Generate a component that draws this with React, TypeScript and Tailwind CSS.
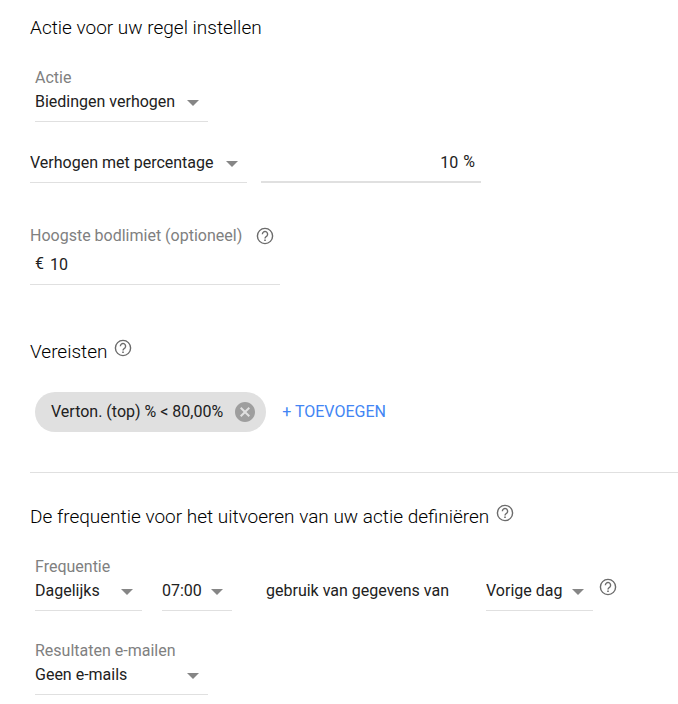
import { useState } from 'react';
import { MdCancel } from 'react-icons/md';

type SelectFieldProps = {
  id: string;
  name: string;
  label?: string;
  options: string[];
  className: string;
};

const SelectField = ({
  id,
  name,
  label,
  options,
  className,
}: SelectFieldProps) => (
  <div className={`flex flex-col border-b border-[#e0e0e0] ${className}`}>
    {label && (
      <label htmlFor={id} className="leading-5 text-[#808080]">
        {label}
      </label>
    )}
    <div className="relative pb-[5px]">
      <select
        id={id}
        aria-label={label ? undefined : name}
        className="block h-7 w-full cursor-pointer appearance-none bg-transparent pr-6 outline-none"
      >
        {options.map(option => (
          <option key={option}>{option}</option>
        ))}
      </select>
      <svg
        viewBox="0 0 12 6"
        className="pointer-events-none absolute top-3 right-[9px] h-[6px] w-3 fill-[#868686]"
      >
        <path d="M0 0h12L6 6z" />
      </svg>
    </div>
  </div>
);

const HelpButton = ({ className = '' }: { className?: string }) => (
  <button
    type="button"
    aria-label="Help"
    className={`shrink-0 cursor-pointer text-[#6b6b6b] ${className}`}
  >
    <svg
      viewBox="0 0 20 20"
      fill="none"
      stroke="currentColor"
      strokeWidth="1.4"
      className="size-5"
    >
      <circle cx="10" cy="10" r="7.6" />
      <path d="M7.4 8.2a2.6 2.6 0 1 1 4.5 1.7C11 10.8 10 11.2 10 12.6" />
      <path d="M10 13.6v1.5" strokeWidth="1.6" />
    </svg>
  </button>
);

export default function App() {
  const [hasCondition, setHasCondition] = useState(true);

  return (
    <form className="min-h-screen bg-white pt-4 pb-2 pl-[30px] font-[Roboto,sans-serif] text-base text-[#212121]">
      <section>
        <h2 className="text-[19px] leading-6 font-light text-black">
          Actie voor uw regel instellen
        </h2>
        <SelectField
          id="action"
          name="Actie"
          label="Actie"
          options={['Biedingen verhogen', 'Biedingen verlagen']}
          className="mt-7 ml-[5px] w-[173px]"
        />

        <div className="mt-[26px] flex items-end gap-[14px]">
          <SelectField
            id="change-type"
            name="Type wijziging"
            options={['Verhogen met percentage', 'Verhogen met bedrag']}
            className="w-[217px]"
          />
          <div className="flex w-[220px] border-b-2 border-[#e0e0e0] pr-[6px] pb-[5px]">
            <input
              aria-label="Percentage"
              defaultValue="10"
              className="h-7 w-full min-w-0 bg-transparent text-right outline-none"
            />
            <span className="pl-[5px] leading-7">%</span>
          </div>
        </div>

        <div className="mt-[41px] w-[250px] border-b border-[#e0e0e0] pb-[6px]">
          <div className="flex items-center gap-[13px]">
            <label htmlFor="max-bid" className="leading-6 text-[#808080]">
              Hoogste bodlimiet (optioneel)
            </label>
            <HelpButton />
          </div>
          <div className="mt-[2px] flex pl-[5px]">
            <span className="pr-[6px] leading-7">€</span>
            <input
              id="max-bid"
              defaultValue="10"
              className="h-7 w-full min-w-0 bg-transparent outline-none"
            />
          </div>
        </div>
      </section>

      <section className="mt-[55px] border-b border-[#e0e0e0] pb-10">
        <div className="flex gap-[6px]">
          <h2 className="text-[19px] leading-6 font-light text-black">
            Vereisten
          </h2>
          <HelpButton className="-mt-[2px] self-start" />
        </div>
        <div className="mt-7 flex items-center gap-4 pl-[5px]">
          {hasCondition && (
            <div className="flex h-10 items-center gap-[10px] rounded-full bg-[#e0e0e0] pr-[9px] pl-4">
              <span>Verton. (top) % &lt; 80,00%</span>
              <button
                type="button"
                aria-label="Verwijderen"
                className="cursor-pointer text-[#9e9e9e]"
                onClick={() => setHasCondition(false)}
              >
                <MdCancel size={24} />
              </button>
            </div>
          )}
          <button
            type="button"
            className="cursor-pointer text-[#4285f4]"
            onClick={() => setHasCondition(true)}
          >
            + TOEVOEGEN
          </button>
        </div>
      </section>

      <section className="mt-8">
        <div className="flex gap-[6px]">
          <h2 className="text-[19px] leading-6 font-light text-black">
            De frequentie voor het uitvoeren van uw actie definiëren
          </h2>
          <HelpButton className="-mt-[2px] self-start" />
        </div>
        <div className="mt-7 flex items-end pl-[5px]">
          <SelectField
            id="frequency"
            name="Frequentie"
            label="Frequentie"
            options={['Dagelijks', 'Wekelijks', 'Maandelijks']}
            className="w-[107px]"
          />
          <SelectField
            id="time"
            name="Tijd"
            options={['07:00', '08:00', '09:00']}
            className="ml-5 w-[70px]"
          />
          <span className="mr-[37px] ml-[34px] pb-[6px] leading-7">
            gebruik van gegevens van
          </span>
          <SelectField
            id="period"
            name="Periode"
            options={['Vorige dag', 'Vorige week']}
            className="w-[107px]"
          />
          <HelpButton className="mb-[14px] ml-[5px]" />
        </div>
        <SelectField
          id="email"
          name="Resultaten e-mailen"
          label="Resultaten e-mailen"
          options={['Geen e-mails', 'Alle e-mails']}
          className="mt-[30px] ml-[5px] w-[173px]"
        />
      </section>
    </form>
  );
}
